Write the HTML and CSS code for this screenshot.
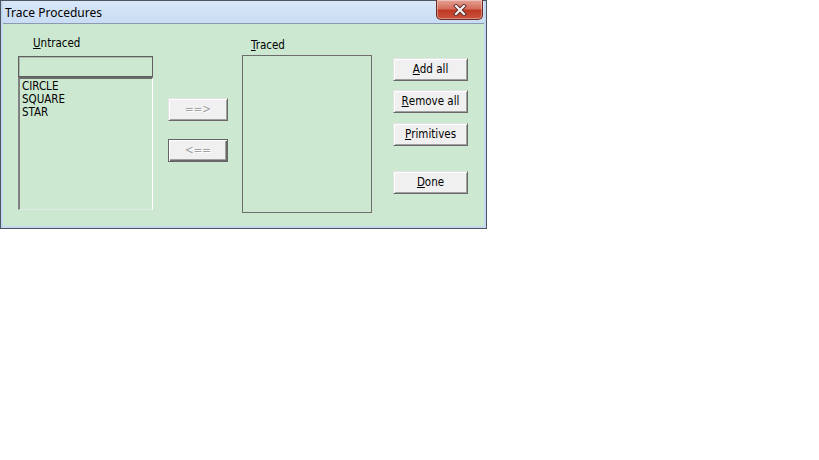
FILE: index.html
```html
<!DOCTYPE html>
<html>
<head>
<meta charset="utf-8">
<link rel="stylesheet" href="styles.css">
</head>
<body>
<div class="window">
  <div class="titlebar">
    <span class="title">Trace Procedures</span>
    <div class="close">
      <svg width="18" height="12" viewBox="0 0 18 12">
        <path d="M5 2 L13 10 M13 2 L5 10" stroke="#5a2a24" stroke-width="4" stroke-linecap="square" fill="none"/>
        <path d="M5 2 L13 10 M13 2 L5 10" stroke="#f4f4f4" stroke-width="2.2" stroke-linecap="square" fill="none"/>
      </svg>
    </div>
  </div>
  <div class="client">
    <div class="col col-untraced">
      <div class="label label-untraced"><u>U</u>ntraced</div>
      <div class="combo"></div>
      <div class="listbox sunken">
        <div class="item">CIRCLE</div>
        <div class="item">SQUARE</div>
        <div class="item">STAR</div>
      </div>
    </div>
    <div class="col col-move">
      <div class="btn btn-small disabled">==&gt;</div>
      <div class="btn btn-small disabled default gap-move">&lt;==</div>
    </div>
    <div class="col col-traced">
      <div class="label label-traced"><u>T</u>raced</div>
      <div class="listbox plain"></div>
    </div>
    <div class="col col-actions">
      <div class="btn btn-wide"><u>A</u>dd all</div>
      <div class="btn btn-wide gap-remove"><u>R</u>emove all</div>
      <div class="btn btn-wide gap-prim"><u>P</u>rimitives</div>
      <div class="btn btn-wide gap-done"><u>D</u>one</div>
    </div>
  </div>
</div>
</body>
</html>
```
FILE: styles.css
```css
html, body {
  margin: 0;
  padding: 0;
  background: #ffffff;
}
body {
  width: 819px;
  height: 460px;
  overflow: hidden;
}
.window {
  box-sizing: border-box;
  width: 487px;
  height: 229px;
  border: 1px solid #4d5660;
  background: #c4d8f0;
  display: flex;
  flex-direction: column;
}
.titlebar {
  height: 22px;
  border-bottom: 1px solid #8a9bb0;
  background: linear-gradient(#d9e7f8, #c9dcf3);
  display: flex;
  justify-content: space-between;
  align-items: flex-start;
  margin: 0 2px 0 2px;
}
.title {
  font-family: "Segoe UI", "Noto Sans", "DejaVu Sans", sans-serif;
  font-size: 12px;
  color: #000;
  line-height: 16px;
  padding: 4px 0 0 2px;
}
.close {
  box-sizing: border-box;
  width: 47px;
  height: 20px;
  margin-top: -1px;
  margin-right: 1px;
  border: 1px solid #6b2a22;
  border-top: none;
  border-radius: 0 0 5px 5px;
  background: linear-gradient(#e4a195 0%, #d66e5c 45%, #c03a24 55%, #c8533d 100%);
  box-shadow: inset 0 0 0 1px rgba(255,255,255,0.35);
  display: flex;
  align-items: center;
  justify-content: center;
}
.client {
  flex: 1;
  margin: 0 2px 2px 2px;
  background: #cde8d0;
  display: flex;
  align-items: flex-start;
  padding-left: 15px;
  font-family: "DejaVu Sans Condensed", "DejaVu Sans", sans-serif;
  font-stretch: condensed;
  font-size: 11.5px;
  color: #000;
}
.col {
  display: flex;
  flex-direction: column;
}
.col-untraced {
  width: 135px;
  margin-top: 12px;
}
.label {
  line-height: 14px;
}
.label-untraced {
  height: 20px;
  padding-left: 15px;
}
.combo {
  box-sizing: border-box;
  height: 21px;
  border: 1px solid #5f5f5f;
  box-shadow: inset 1px 1px 0 #a8b8aa;
}
.listbox {
  box-sizing: border-box;
}
.sunken {
  height: 133px;
  border-style: solid;
  border-width: 2px 1px 1px 2px;
  border-color: #6b6b6b #ffffff #e2e8e2 #808080;
  padding: 1px 0 0 2px;
}
.item {
  line-height: 13px;
}
.col-move {
  margin-left: 15px;
  margin-top: 74px;
}
.btn {
  box-sizing: border-box;
  height: 23px;
  background: #f0f0f0;
  border: 1px solid;
  border-color: #e3e3e3 #696969 #696969 #e3e3e3;
  box-shadow: inset 1px 1px 0 #ffffff, inset -1px -1px 0 #a0a0a0;
  display: flex;
  align-items: center;
  justify-content: center;
  line-height: 13px;
}
.btn-small {
  width: 60px;
}
.btn-wide {
  width: 75px;
}
.disabled {
  color: #a0a0a0;
  text-shadow: 1px 1px 0 #ffffff;
}
.default {
  border: 1px solid #646464;
  box-shadow: inset 1px 1px 0 #ffffff, inset -1px -1px 0 #696969, inset -2px -2px 0 #a0a0a0;
}
.gap-move {
  margin-top: 18px;
}
.col-traced {
  width: 130px;
  margin-left: 14px;
  margin-top: 14px;
}
.label-traced {
  height: 17px;
  padding-left: 9px;
}
.plain {
  height: 158px;
  border: 1px solid #6d6d6d;
}
.col-actions {
  margin-left: 21px;
  margin-top: 34px;
}
.gap-remove {
  margin-top: 9px;
}
.gap-prim {
  margin-top: 10px;
}
.gap-done {
  margin-top: 25px;
}
```
